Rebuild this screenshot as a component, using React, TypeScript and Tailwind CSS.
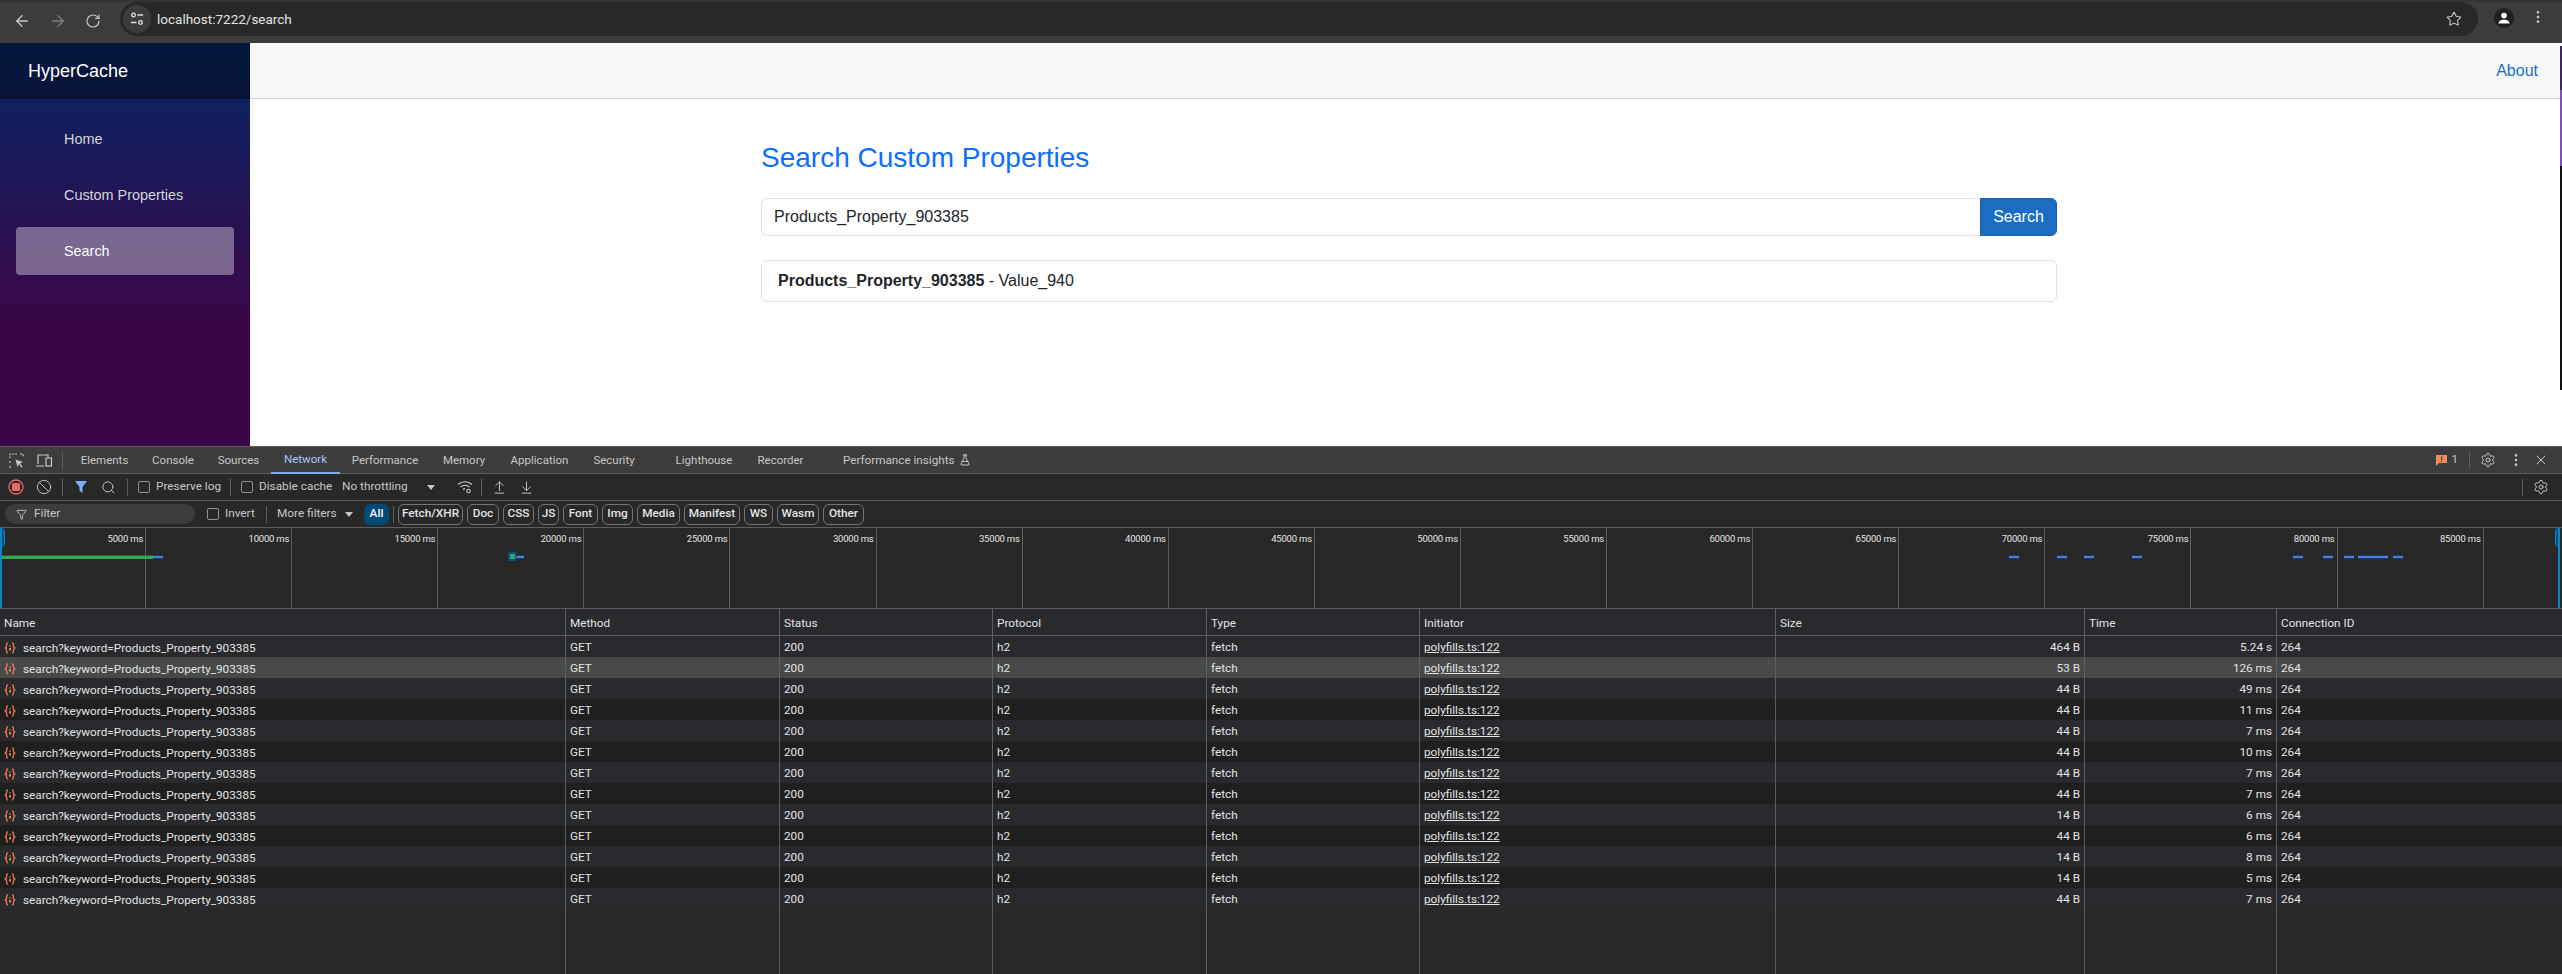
import {
  ArrowDownToLine,
  ArrowLeft,
  ArrowRight,
  ArrowUpFromLine,
  Ban,
  EllipsisVertical,
  Filter,
  FlaskConical,
  RotateCw,
  Search,
  Settings,
  Star,
  X,
} from 'lucide-react';

const tabs = [
  { label: 'Elements', width: 'w-[71px]' },
  { label: 'Console', width: 'w-[66px]' },
  { label: 'Sources', width: 'w-[65px]' },
  { label: 'Network', width: 'w-[69px]', active: true },
  { label: 'Performance', width: 'w-[90px]' },
  { label: 'Memory', width: 'w-[68px]' },
  { label: 'Application', width: 'w-[83px]' },
  { label: 'Security', width: 'w-[66px]' },
  { label: 'Lighthouse', width: 'w-[82px] ml-4' },
  { label: 'Recorder', width: 'w-[71px]' },
];

const filterTypes = [
  { label: 'Fetch/XHR', width: 'w-[65px]' },
  { label: 'Doc', width: 'w-[32px]' },
  { label: 'CSS', width: 'w-[31px]' },
  { label: 'JS', width: 'w-[21px]' },
  { label: 'Font', width: 'w-[35px]' },
  { label: 'Img', width: 'w-[31px]' },
  { label: 'Media', width: 'w-[43px]' },
  { label: 'Manifest', width: 'w-[56px]' },
  { label: 'WS', width: 'w-[29px]' },
  { label: 'Wasm', width: 'w-[42px]' },
  { label: 'Other', width: 'w-[41px]' },
];

const ticks = Array.from({ length: 18 }, (_, i) => (i < 17 ? `${(i + 1) * 5000} ms` : ''));

const blueBars = [
  [153, 10],
  [516, 8],
  [2009, 10],
  [2057, 10],
  [2084, 10],
  [2132, 10],
  [2293, 10],
  [2323, 10],
  [2344, 10],
  [2358, 10],
  [2368, 10],
  [2378, 10],
  [2393, 10],
];

const sizes = ['464 B', '53 B', '44 B', '44 B', '44 B', '44 B', '44 B', '44 B', '14 B', '44 B', '14 B', '14 B', '44 B'];
const times = ['5.24 s', '126 ms', '49 ms', '11 ms', '7 ms', '10 ms', '7 ms', '7 ms', '6 ms', '6 ms', '8 ms', '5 ms', '7 ms'];

const columns = 'grid grid-cols-[566px_214px_213px_214px_213px_356px_309px_192px_1fr]';
const cell = 'border-r border-[#5e5e5e] px-1 truncate';

function FetchIcon() {
  return (
    <svg width="12" height="12" viewBox="0 0 12 12" fill="none" stroke="#e8764b" strokeWidth="1.4" className="shrink-0">
      <path d="M4 1C2.4 1 2.6 2.8 2.6 4 2.6 5 2.1 5.7 .8 6 2.1 6.3 2.6 7 2.6 8 2.6 9.2 2.4 11 4 11" />
      <path d="M8 1C9.6 1 9.4 2.8 9.4 4 9.4 5 9.9 5.7 11.2 6 9.9 6.3 9.4 7 9.4 8 9.4 9.2 9.6 11 8 11" />
      <path d="M6 3.4V4.6M6 6V8.6" stroke="#f4b79c" />
    </svg>
  );
}

function Checkbox({ className = '' }: { className?: string }) {
  return <span className={`block size-3 rounded-[2px] border border-[#8e918f] shrink-0 ${className}`} />;
}

function Separator({ className = 'mx-[11px]' }: { className?: string }) {
  return <span className={`w-px h-[17px] bg-[#5e5e5e] shrink-0 ${className}`} />;
}

function BrowserBar() {
  return (
    <div className="h-[43px] shrink-0 bg-[#3c3c3c] flex items-start pt-[2px] border-t-2 border-[#333333] text-[#c7c7c7]">
      <div className="w-[120px] h-[34px] flex items-center pl-[13px] gap-[18px]">
        <ArrowLeft size={18} strokeWidth={1.8} />
        <ArrowRight size={18} strokeWidth={1.8} className="text-[#7d7d7d]" />
        <RotateCw size={16} strokeWidth={1.8} />
      </div>
      <div className="w-[2358px] h-[34px] -mt-[2px] rounded-full bg-[#282828] flex items-center pl-[3px] pr-[16px]">
        <span className="size-[28px] rounded-full bg-[#3c3c3c] flex items-center justify-center">
          <svg width="16" height="16" viewBox="0 0 16 16" fill="none" stroke="#e3e3e3" strokeWidth="1.3">
            <circle cx="4.5" cy="4" r="1.8" />
            <path d="M8.5 4H14M2 11.5H7.5" />
            <circle cx="11.5" cy="11.5" r="1.8" />
          </svg>
        </span>
        <span className="ml-[6px] text-[13.5px] text-[#e3e3e3] [font-family:Roboto,sans-serif]">localhost:7222/search</span>
        <Star size={16} strokeWidth={1.6} className="ml-auto" />
      </div>
      <span className="ml-[16px] mt-[6px] size-5 rounded-full bg-[#1f1f1f] flex items-center justify-center -translate-y-0.5">
        <svg width="14" height="14" viewBox="0 0 14 14" fill="#ffffff">
          <circle cx="7" cy="4.6" r="2.8" />
          <path d="M1.5 12.5C1.5 9.8 4.5 8.8 7 8.8S12.5 9.8 12.5 12.5Z" />
        </svg>
      </span>
      <EllipsisVertical size={16} strokeWidth={2} className="ml-[16px] mt-[7px] -translate-y-0.5" />
    </div>
  );
}

function Sidebar() {
  return (
    <aside className="w-[250px] shrink-0 bg-[linear-gradient(180deg,#052767_0%,#3a0647_70%)] text-[#d7d7d7] text-[14.4px]">
      <div className="h-[56px] bg-black/40 flex items-center pl-[28px] text-[18px] text-white">HyperCache</div>
      <nav className="px-4 pt-4 flex flex-col gap-2">
        <a className="h-12 flex items-center pl-12 pt-[2px] rounded">Home</a>
        <a className="h-12 flex items-center pl-12 pt-[2px] rounded">Custom Properties</a>
        <a className="h-12 flex items-center pl-12 pt-[2px] rounded bg-white/[0.37] text-white">Search</a>
      </nav>
    </aside>
  );
}

function Page() {
  return (
    <main className="relative flex-1 bg-white text-[#212529]">
      <header className="h-[56px] bg-[#f7f7f7] border-b border-[#d6d5d5] flex items-center justify-end pr-[24px] text-[#1b6ec2]">
        About
      </header>
      <section className="w-[1296px] ml-[511px] pt-[42px]">
        <h3 className="text-[28px] leading-[1.2] text-[#0d6efd]">Search Custom Properties</h3>
        <div className="mt-[23px] flex h-[38px]">
          <div className="flex-1 border border-r-0 border-[#dee2e6] rounded-l-md flex items-center pl-3">
            Products_Property_903385
          </div>
          <button className="w-[77px] bg-[#1b6ec2] border border-[#1861ac] rounded-r-md text-white">Search</button>
        </div>
        <div className="mt-6 h-[42px] border border-[#dee2e6] rounded-md flex items-center px-4">
          <b className="font-bold">Products_Property_903385</b>
          <span className="whitespace-pre"> - Value_940</span>
        </div>
      </section>
      <div className="absolute right-0 top-[3px] w-[2px] h-[344px] flex flex-col">
        <span className="h-[44px] bg-[#3b2a5c]" />
        <span className="h-[76px] bg-[#7952b3]" />
        <span className="flex-1 bg-[#111111]" />
      </div>
    </main>
  );
}

function DevtoolsTabs() {
  return (
    <div className="h-[28px] shrink-0 bg-[#3c3c3c] border-y border-[#5e5e5e] flex items-center text-[#c7c7c7] text-[11.5px]">
      <div className="w-[69px] flex items-center pl-[9px] shrink-0">
        <svg width="15" height="15" viewBox="0 0 15 15" fill="none" stroke="#c7c7c7" strokeWidth="1.2">
          <path d="M5 1H1V5M1 8V10M1 13V14H3M6 1H8M11 1H14V4" strokeDasharray="2 1.2" />
          <path d="M6.5 6.5L14 9L11 10.5 13.5 13.5 12.5 14.5 10 11 8.5 14Z" fill="#c7c7c7" stroke="none" />
        </svg>
        <svg width="18" height="15" viewBox="0 0 18 15" fill="none" stroke="#c7c7c7" strokeWidth="1.2" className="ml-[11px]">
          <path d="M3 11V2H13V4M1 13H9" />
          <rect x="11" y="5" width="5.5" height="8" />
        </svg>
        <Separator className="ml-[9px]" />
      </div>
      {tabs.map((tab) => (
        <span
          key={tab.label}
          className={`h-full flex items-center justify-center pt-px ${tab.width} ${
            tab.active ? 'text-[#a8c7fa] border-b-2 border-[#7cacf8] -mb-px' : ''
          }`}
        >
          {tab.label}
        </span>
      ))}
      <span className="ml-[27px] pt-px flex items-center gap-1 text-[11.7px] whitespace-nowrap">
        Performance insights
        <FlaskConical size={12} />
      </span>
      <div className="ml-auto flex items-center pr-[13px]">
        <svg width="11" height="11" viewBox="0 0 11 11" fill="#f28b54">
          <path d="M0 0H11V8H3L0 11Z" />
          <path d="M5 1.5H6.2V5H5ZM5 5.8H6.2V7H5Z" fill="#3c3c3c" />
        </svg>
        <span className="ml-[5px]">1</span>
        <Separator className="ml-[11px] mr-[10px]" />
        <Settings size={16} strokeWidth={1.5} />
        <EllipsisVertical size={16} strokeWidth={2} className="ml-[12px]" />
        <X size={16} strokeWidth={1.5} className="ml-[9px]" />
      </div>
    </div>
  );
}

function NetworkToolbar() {
  return (
    <div className="h-[27px] shrink-0 bg-[#282828] border-b border-[#5e5e5e] flex items-center pl-2 text-[#c7c7c7] whitespace-nowrap">
      <svg width="16" height="16" viewBox="0 0 16 16" fill="none" className="shrink-0">
        <circle cx="8" cy="8" r="7" stroke="#e46962" strokeWidth="1.3" />
        <rect x="4" y="4" width="8" height="8" rx="1" fill="#e46962" />
      </svg>
      <Ban size={16} strokeWidth={1.4} className="ml-[12px] shrink-0" />
      <Separator className="ml-[10px] mr-[11px]" />
      <svg width="14" height="14" viewBox="0 0 14 14" fill="#7cacf8" className="shrink-0">
        <path d="M1 1H13L8.5 7V13L5.5 11V7Z" />
      </svg>
      <Search size={15} strokeWidth={1.5} className="ml-[13px] shrink-0" />
      <Separator className="ml-[11px] mr-[10px]" />
      <Checkbox />
      <span className="ml-[6px] w-[64px]">Preserve log</span>
      <Separator className="ml-[10px] mr-[10px]" />
      <Checkbox />
      <span className="ml-[6px] w-[72px]">Disable cache</span>
      <span className="ml-[11px] w-[69px]">No throttling</span>
      <span className="ml-[16px] w-0 h-0 border-x-[4px] border-x-transparent border-t-[5px] border-t-[#c7c7c7]" />
      <svg width="16" height="14" viewBox="0 0 16 14" fill="none" stroke="#c7c7c7" strokeWidth="1.1" className="ml-[22px] shrink-0">
        <path d="M1 4.5C4.8 .8 11.2 .8 15 4.5M3.5 7C5.8 4.8 10.2 4.8 12.5 7M6 9.5C6.8 8.8 7.4 8.6 8 8.6" />
        <circle cx="11.5" cy="11" r="1.8" />
      </svg>
      <Separator className="ml-[8px] mr-[10px]" />
      <ArrowUpFromLine size={15} strokeWidth={1.5} className="shrink-0" />
      <ArrowDownToLine size={15} strokeWidth={1.5} className="ml-[12px] shrink-0" />
      <div className="ml-auto flex items-center pr-[13px]">
        <Separator className="mr-[10px]" />
        <Settings size={16} strokeWidth={1.5} />
      </div>
    </div>
  );
}

function FilterBar() {
  return (
    <div className="h-[27px] shrink-0 bg-[#282828] border-b border-[#5e5e5e] flex items-center pl-[5px] text-[#c7c7c7] whitespace-nowrap">
      <div className="w-[190px] h-5 rounded-full bg-[#3c3c3c] flex items-center pl-[11px] gap-[7px] shrink-0">
        <Filter size={11} />
        <span>Filter</span>
      </div>
      <Checkbox className="ml-3 mr-[6px]" />
      <span className="w-[30px]">Invert</span>
      <Separator className="ml-[11px] mr-[10px]" />
      <span className="w-[61px]">More filters</span>
      <span className="ml-[7px] w-0 h-0 border-x-[4px] border-x-transparent border-t-[5px] border-t-[#c7c7c7]" />
      <span className="ml-[11px] h-[21px] w-[25px] rounded-[6px] bg-[#004a77] text-white font-medium flex items-center justify-center">
        All
      </span>
      <Separator className="ml-[4px] mr-[4px]" />
      <div className="flex gap-1">
        {filterTypes.map((type) => (
          <span
            key={type.label}
            className={`h-[21px] rounded-[6px] border border-[#757575] text-[#e3e3e3] font-medium flex items-center justify-center ${type.width}`}
          >
            {type.label}
          </span>
        ))}
      </div>
    </div>
  );
}

function Overview() {
  return (
    <div className="relative h-[81px] shrink-0 bg-[#282828] border-b border-[#5e5e5e]">
      <div className="h-full grid grid-cols-[repeat(18,146.1px)]">
        {ticks.map((tick, i) => (
          <div
            key={i}
            className={`pt-[4px] pr-[2px] text-right text-[9.5px] tracking-[-0.2px] text-[#e3e3e3] ${tick ? 'border-r border-[#5e5e5e]' : ''}`}
          >
            {tick}
          </div>
        ))}
      </div>
      {/* waterfall drawing: y is relative to the top of the overview */}
      <svg className="absolute inset-0" width="2562" height="80">
        <rect x="508" y="24" width="8" height="9" fill="#0b4f7d" />
        <rect x="510" y="26" width="5" height="5" fill="#34a853" />
        <rect x="2" y="28" width="151" height="3" fill="#34a853" />
        <rect x="2" y="27" width="151" height="1" fill="#2c5a3c" />
        {blueBars.map(([x, w]) => (
          <g key={x}>
            <rect x={x} y="27" width={w} height="4" fill="#1e3a66" />
            <rect x={x} y="28" width={w} height="2" fill="#4a80d8" />
          </g>
        ))}
      </svg>
      <span className="absolute left-0 top-0 w-[5px] h-[19px] rounded-r-sm bg-[#0b4f7d] border-r border-[#0a84c6]" />
      <span className="absolute left-0 top-0 w-[2px] h-[80px] bg-[#0a84c6]" />
      <span className="absolute right-[2px] top-0 w-[5px] h-[19px] rounded-l-sm bg-[#0b4f7d] border-l border-[#0a84c6]" />
      <span className="absolute right-[2px] top-0 w-[2px] h-[80px] bg-[#0a84c6]" />
    </div>
  );
}

function NetworkTable() {
  return (
    <div className="flex-1 flex flex-col min-h-0 bg-[#282828] text-[#e3e3e3] text-[11.75px]">
      <div className={`${columns} h-[27px] shrink-0 items-stretch bg-[#292a2d] border-b border-[#5e5e5e] leading-[28px]`}>
        {['Name', 'Method', 'Status', 'Protocol', 'Type', 'Initiator', 'Size', 'Time'].map((name) => (
          <div key={name} className={cell}>
            {name}
          </div>
        ))}
        <div className="px-1">Connection ID</div>
      </div>
      {sizes.map((size, i) => (
        <div
          key={i}
          className={`${columns} h-[21px] shrink-0 leading-[20px] ${
            i === 1 ? 'bg-[#484a49]' : i % 2 === 0 ? 'bg-[#292a2d]' : 'bg-[#1f1f1f]'
          }`}
        >
          <div className={`${cell} flex items-center gap-[7px] pt-[2px]`}>
            <FetchIcon />
            <span>search?keyword=Products_Property_903385</span>
          </div>
          <div className={`${cell} pt-px`}>GET</div>
          <div className={`${cell} pt-px`}>200</div>
          <div className={`${cell} pt-px`}>h2</div>
          <div className={`${cell} pt-px`}>fetch</div>
          <div className={`${cell} pt-px`}>
            <span className="underline">polyfills.ts:122</span>
          </div>
          <div className={`${cell} pt-px text-right`}>{size}</div>
          <div className={`${cell} pt-px text-right`}>{times[i]}</div>
          <div className="px-1 pt-px">264</div>
        </div>
      ))}
      <div className={`${columns} flex-1`}>
        {Array.from({ length: 8 }, (_, i) => (
          <div key={i} className="border-r border-[#5e5e5e]" />
        ))}
      </div>
    </div>
  );
}

export default function App() {
  return (
    <div className="w-[2562px] h-[974px] overflow-hidden flex flex-col [font-family:'Liberation_Sans',Arial,sans-serif] text-base">
      <BrowserBar />
      <div className="flex h-[403px] shrink-0">
        <Sidebar />
        <Page />
      </div>
      <div className="flex-1 min-h-0 flex flex-col text-[11.8px] [font-family:Roboto,sans-serif]">
        <DevtoolsTabs />
        <NetworkToolbar />
        <FilterBar />
        <Overview />
        <NetworkTable />
      </div>
    </div>
  );
}
